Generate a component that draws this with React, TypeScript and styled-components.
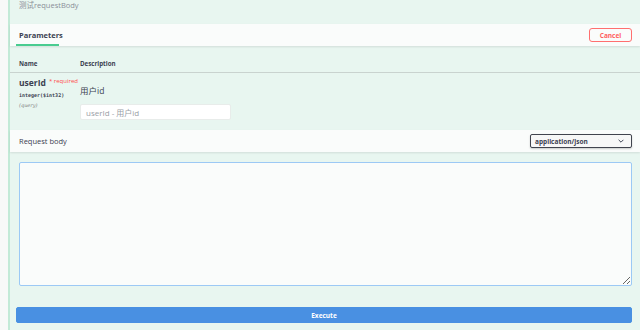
import React from "react";
import styled, { createGlobalStyle } from "styled-components";

const GlobalStyle = createGlobalStyle`
  html, body {
    margin: 0;
    padding: 0;
    background: #f8f9f8;
    overflow: hidden;
    font-family: "Open Sans", "Noto Sans CJK SC", sans-serif;
    color: #3b4151;
  }
  * {
    box-sizing: border-box;
  }
`;

const App: React.FC = () => {
  return (
    <>
      <GlobalStyle />
      <Page>
        <OpBlock>
          <Summary>测试requestBody</Summary>
          <SectionBar>
            <Tab>Parameters</Tab>
            <CancelButton>Cancel</CancelButton>
          </SectionBar>
          <ParamTable>
            <HeadRow>
              <NameCell>Name</NameCell>
              <HeadLabel>Description</HeadLabel>
            </HeadRow>
            <ParamRow>
              <NameCell>
                <ParamName>
                  userId<Required>* required</Required>
                </ParamName>
                <ParamType>integer($int32)</ParamType>
                <ParamIn>(query)</ParamIn>
              </NameCell>
              <DescCell>
                <DescText>用户id</DescText>
                <ParamInput placeholder="userId - 用户id" />
              </DescCell>
            </ParamRow>
          </ParamTable>
          <BodyBar>
            <BodyLabel>Request body</BodyLabel>
            <SelectBox>
              application/json
              <svg width="6" height="4" viewBox="0 0 10 6">
                <path
                  d="M1 1l4 4 4-4"
                  fill="none"
                  stroke="#3b4151"
                  strokeWidth="1.6"
                />
              </svg>
            </SelectBox>
          </BodyBar>
          <BodyArea>
            <BodyEditor />
          </BodyArea>
          <ExecuteWrap>
            <ExecuteButton>Execute</ExecuteButton>
          </ExecuteWrap>
        </OpBlock>
      </Page>
    </>
  );
};

export default App;

const Page = styled.div`
  display: flex;
  height: 330px;
  padding-left: 8px;
`;

const OpBlock = styled.div`
  flex: 1;
  display: flex;
  flex-direction: column;
  background: #e8f6f0;
  border-left: 2px solid #c3ead7;
`;

const Summary = styled.div`
  height: 24px;
  padding: 0 9px;
  font-size: 7.5px;
  line-height: 11px;
  color: #8a8f99;
`;

const SectionBar = styled.div`
  display: flex;
  align-items: center;
  justify-content: space-between;
  height: 22px;
  padding: 0 8px 0 6px;
  background: #fafcfb;
  box-shadow: 0 1px 2px rgba(0, 0, 0, 0.1);
`;

const Tab = styled.div`
  align-self: stretch;
  display: flex;
  align-items: center;
  width: 43px;
  padding: 2px 3px 0;
  font-size: 7.5px;
  font-weight: 700;
  color: #3b4151;
  border-bottom: 2px solid #49cc90;
`;

const CancelButton = styled.button`
  width: 43px;
  height: 14px;
  padding: 0;
  background: transparent;
  border: 1px solid #ff6f6f;
  border-radius: 3px;
  color: #ff6060;
  font-family: inherit;
  font-size: 6.5px;
  font-weight: 700;
`;

const ParamTable = styled.div`
  padding: 9px 0 0;
`;

const HeadRow = styled.div`
  display: flex;
  align-items: center;
  height: 18px;
  border-bottom: 1px solid #c9d3cf;
  font-size: 6.2px;
  font-weight: 700;
`;

const NameCell = styled.div`
  width: 70px;
  padding-left: 9px;
`;

const HeadLabel = styled.div``;

const ParamRow = styled.div`
  display: flex;
  height: 57px;
  padding-top: 4px;
`;

const ParamName = styled.div`
  font-size: 8.5px;
  font-weight: 700;
  line-height: 12px;
  white-space: nowrap;
`;

const Required = styled.span`
  position: relative;
  top: -3px;
  margin-left: 3px;
  font-size: 6px;
  font-weight: 400;
  color: #ff4b4b;
`;

const ParamType = styled.div`
  margin-top: 1px;
  font-family: "DejaVu Sans Mono", monospace;
  font-size: 5px;
  font-weight: 700;
  line-height: 9px;
  white-space: nowrap;
`;

const ParamIn = styled.div`
  margin-top: 1px;
  font-family: "DejaVu Serif", serif;
  font-size: 5px;
  font-style: italic;
  line-height: 9px;
  color: #808080;
`;

const DescCell = styled.div`
  display: flex;
  flex-direction: column;
  padding-top: 8px;
`;

const DescText = styled.div`
  height: 19px;
  font-size: 8.5px;
  line-height: 12px;
`;

const ParamInput = styled.input`
  width: 151px;
  height: 16px;
  padding: 0 5px;
  background: #fff;
  border: 1px solid #e8ecea;
  border-radius: 2px;
  font-family: inherit;
  font-size: 8px;
  outline: none;

  &::placeholder {
    color: #9a9ea6;
  }
`;

const BodyBar = styled(SectionBar)`
  padding: 0 8px 0 9px;
`;

const BodyLabel = styled.div`
  font-size: 7.5px;
  color: #3b4151;
`;

const SelectBox = styled.div`
  display: flex;
  align-items: center;
  justify-content: space-between;
  width: 102px;
  height: 14px;
  padding: 0 7px 0 4px;
  background: #f7f7f7;
  border: 1px solid #41444e;
  border-radius: 2px;
  box-shadow: 0 1px 2px rgba(0, 0, 0, 0.2);
  font-size: 6.5px;
  font-weight: 700;
`;

const BodyArea = styled.div`
  padding: 10px 8px 0 9px;
`;

const BodyEditor = styled.textarea`
  display: block;
  width: 100%;
  height: 124px;
  background: #fafcfb;
  border: 1px solid #9cc9f5;
  border-radius: 2px;
  outline: none;
  resize: vertical;
`;

const ExecuteWrap = styled.div`
  padding: 21px 8px 0 6px;
`;

const ExecuteButton = styled.button`
  display: block;
  width: 100%;
  height: 16px;
  padding: 0;
  background: #4990e2;
  border: 1px solid #4990e2;
  border-radius: 2px;
  color: #fff;
  font-family: inherit;
  font-size: 6.5px;
  font-weight: 700;
`;
